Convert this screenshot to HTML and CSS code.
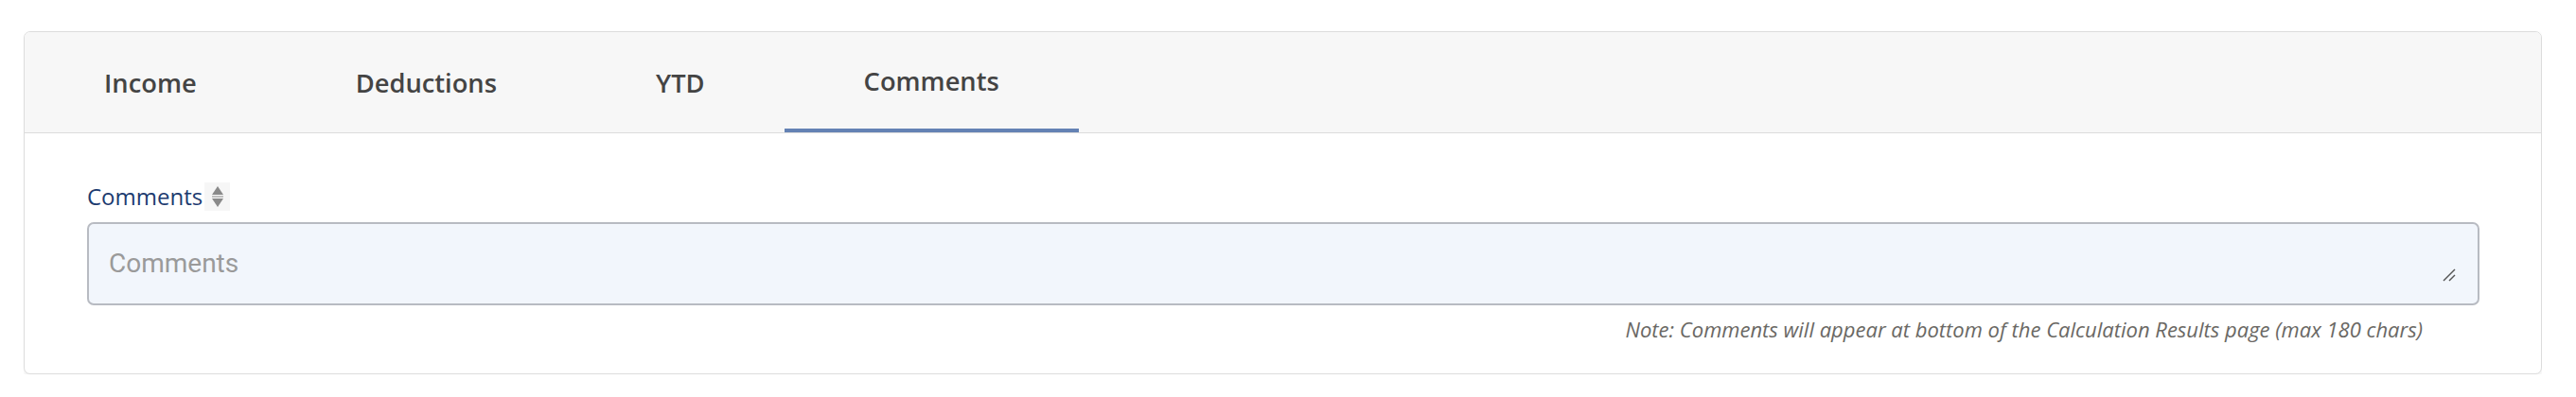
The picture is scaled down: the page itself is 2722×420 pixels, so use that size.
FILE: index.html
```html
<!DOCTYPE html>
<html lang="en">
<head>
    <meta charset="UTF-8">
    <meta name="viewport" content="width=device-width, initial-scale=1.0">
    <title>Calculation - Comments</title>
    <link rel="stylesheet" href="styles.css">
</head>
<body>
    <div class="card">
        <div class="tabs">
            <div class="tab">Income</div>
            <div class="tab">Deductions</div>
            <div class="tab">YTD</div>
            <div class="tab active">Comments</div>
        </div>

        <div class="card-body">
            <div class="field-label">
                <span>Comments</span>
                <span class="sort-icon">
                    <svg width="14" height="26" viewBox="0 0 14 26">
                        <path d="M7 2 L13 11 L1 11 Z" fill="#8a8a8a"/>
                        <rect x="1" y="12.5" width="12" height="1" fill="#8a8a8a"/>
                        <path d="M1 15 L13 15 L7 24 Z" fill="#8a8a8a"/>
                    </svg>
                </span>
            </div>
            <div class="input-wrap">
                <textarea class="comments-input" rows="1" placeholder="Comments"></textarea>
                <svg class="resize-grip" width="14" height="14" viewBox="0 0 14 14">
                    <line x1="1" y1="13" x2="13" y2="1" stroke="#555" stroke-width="1.4"/>
                    <line x1="7" y1="13" x2="13" y2="7" stroke="#555" stroke-width="1.4"/>
                </svg>
            </div>
            <div class="note">Note: Comments will appear at bottom of the Calculation Results page (max 180 chars)</div>
        </div>
    </div>
</body>
</html>
```

FILE: styles.css
```css
body {
    font-family: "Open Sans", Arial, sans-serif;
    margin: 33px 36px 0 25px;
    background-color: white;
}
.card {
    border: 1px solid #dcdcdc;
    border-radius: 7px;
    box-shadow: 0 2px 4px rgba(0,0,0,0.08);
    background-color: white;
    overflow: hidden;
}
.tabs {
    display: flex;
    height: 106px;
    background-color: #f7f7f7;
    border-bottom: 1px solid #dcdcdc;
}
.tab {
    display: flex;
    align-items: center;
    padding: 0 84px;
    font-size: 27.3px;
    font-weight: 600;
    color: #444;
    box-sizing: border-box;
}
.tab.active {
    border-bottom: 4px solid #6482b4;
}
.card-body {
    padding: 49px 65px 31px 66px;
}
.field-label {
    display: flex;
    align-items: center;
    gap: 2px;
    font-size: 24px;
    line-height: 36px;
    color: #1d3b70;
}
.sort-icon {
    display: flex;
    align-items: center;
    justify-content: center;
    width: 27px;
    height: 30px;
    background-color: #f6f6f6;
}
.input-wrap {
    position: relative;
    margin-top: 9px;
}
.comments-input {
    display: block;
    width: 100%;
    box-sizing: border-box;
    padding: 21px 21px;
    font-family: Roboto, sans-serif;
    font-size: 28px;
    line-height: 42px;
    color: #333;
    background-color: #f2f6fc;
    border: 2px solid #b8bbc2;
    border-radius: 7px;
    resize: none;
    outline: none;
}
.comments-input::placeholder {
    color: #9a9a9a;
}
.resize-grip {
    position: absolute;
    right: 25px;
    bottom: 25px;
}
.note {
    margin-top: 9px;
    padding-right: 60px;
    text-align: right;
    font-size: 22px;
    line-height: 32px;
    font-style: italic;
    color: #6a6864;
}
```
